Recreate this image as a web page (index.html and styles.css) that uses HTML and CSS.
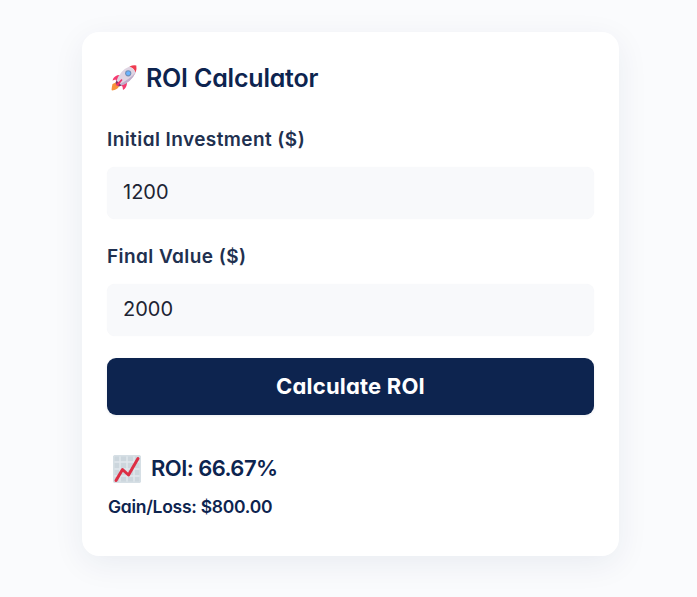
FILE: index.html
```html
<!DOCTYPE html>
<html lang="en">
<head>
    <meta charset="UTF-8">
    <title>ROI Calculator</title>
    <link rel="stylesheet" href="styles.css">
</head>
<body>
<div class="card">
    <h1 class="title">
        <svg class="rocket" viewBox="0 0 26 26">
            <path d="M6 17 L1.5 19 Q0 25.500 1 25.500 Q6.500 25 8.500 20.500Z" fill="#f7933c"/>
            <path d="M9 10 Q3 10 1.500 15.500 L4.500 14.500 L6 18Z" fill="#f43b70"/>
            <path d="M16 17 Q16 23 12 25 L11.500 21.500 L8 20Z" fill="#f43b70"/>
            <path d="M5 17 Q9 5 19 1.200 L25 7 Q20 17 9 21Z" fill="#dfd4e2"/>
            <path d="M7 20 Q18 15 25 7 L25 7 Q20 18 9 21Z" fill="#bfaecb"/>
            <path d="M18.500 1.400 Q22 0 25.300 0.500 Q26 4 24.700 7.500 Q23 3 18.500 1.400Z" fill="#ef3b50"/>
            <path d="M5.500 15.500 L10.500 20.500 L8 21.500 L4.500 18Z" fill="#7b3569"/>
            <path d="M4.500 20 L10.500 14 L11.500 15 L7 21Z" fill="#f32d69"/>
            <circle cx="17.200" cy="8.300" r="3.100" fill="#6f8fb8"/>
            <circle cx="17.200" cy="8.300" r="2" fill="#6bb4ff"/>
        </svg>
        <span>ROI Calculator</span>
    </h1>
    <label class="label" for="initial">Initial Investment ($)</label>
    <input class="field" id="initial" type="text" value="1200">
    <label class="label" for="final">Final Value ($)</label>
    <input class="field" id="final" type="text" value="2000">
    <button class="btn" type="button">Calculate ROI</button>
    <div class="result">
        <div class="roi">
            <svg class="chart" viewBox="0 0 28 28">
                <rect width="28" height="28" rx="2.500" fill="#ccd6dd"/>
                <path d="M1 7h26M1 14h26M1 21h26M7 1v26M14 1v26M21 1v26" stroke="#e1e8ed" stroke-width="1.400"/>
                <rect x="0.800" y="0.800" width="26.400" height="26.400" rx="2" fill="none" stroke="#d6dfe5" stroke-width="1.600"/>
                <path d="M3 25.500 L9.500 14.500 L15.500 20 L25 3.500" fill="none" stroke="#dd2e44" stroke-width="3" stroke-linecap="round" stroke-linejoin="round"/>
            </svg>
            <span>ROI: 66.67%</span>
        </div>
        <div class="gain">Gain/Loss: $800.00</div>
    </div>
</div>
</body>
</html>
```
FILE: styles.css
```css
*{
    box-sizing: border-box;
}
body{
    margin: 0;
    padding: 32px 78px 0 82px;
    height: 597px;
    overflow: hidden;
    background: #fafbfd;
    font-family: Inter, "Open Sans", sans-serif;
    font-feature-settings: "cv11";
    color: #0d244f;
}
.card{
    height: 524px;
    padding: 25px;
    background: #fff;
    border-radius: 17px;
    box-shadow: 0 8px 32px rgba(13, 36, 79, 0.07);
}
.title{
    display: flex;
    align-items: center;
    height: 42px;
    margin: 0 0 27px;
    padding-left: 4px;
    font-size: 25px;
    font-weight: 600;
    letter-spacing: -0.2px;
    white-space: nowrap;
}
.rocket{
    width: 26px;
    height: 26px;
    margin-right: 9px;
}
.label{
    display: block;
    height: 39px;
    margin-bottom: 2px;
    padding-top: 1px;
    font-size: 19px;
    line-height: 26px;
    font-weight: 600;
    letter-spacing: 0.42px;
    color: #21304f;
    white-space: nowrap;
}
.field{
    display: block;
    width: 100%;
    height: 52px;
    margin: 0 0 24px;
    padding: 0 16px 2px;
    border: 0;
    border-radius: 8px;
    outline: none;
    background: #f8f9fb;
    box-shadow: 0 0 1px rgba(13, 36, 79, 0.06);
    font: inherit;
    font-feature-settings: inherit;
    font-size: 20px;
    color: #1d2433;
}
.btn{
    display: block;
    width: 100%;
    height: 57px;
    margin-top: -2px;
    padding: 0 0 1px;
    border: 0;
    border-radius: 9px;
    background: #0d244f;
    box-shadow: 0 1px 3px rgba(13, 36, 79, 0.08);
    font: inherit;
    font-feature-settings: inherit;
    font-size: 22px;
    font-weight: 700;
    letter-spacing: 0.2px;
    color: #fff;
}
.result{
    padding-top: 37px;
    font-weight: 600;
    white-space: nowrap;
}
.roi{
    display: flex;
    align-items: center;
    height: 33px;
    padding-left: 6px;
    font-size: 22px;
    letter-spacing: -0.55px;
}
.roi span{
    padding-bottom: 2px;
}
.chart{
    width: 28px;
    height: 28px;
    margin-right: 10px;
}
.gain{
    padding-left: 1px;
    margin-top: 9px;
    font-size: 17.5px;
    line-height: 26px;
    letter-spacing: -0.27px;
}
```
